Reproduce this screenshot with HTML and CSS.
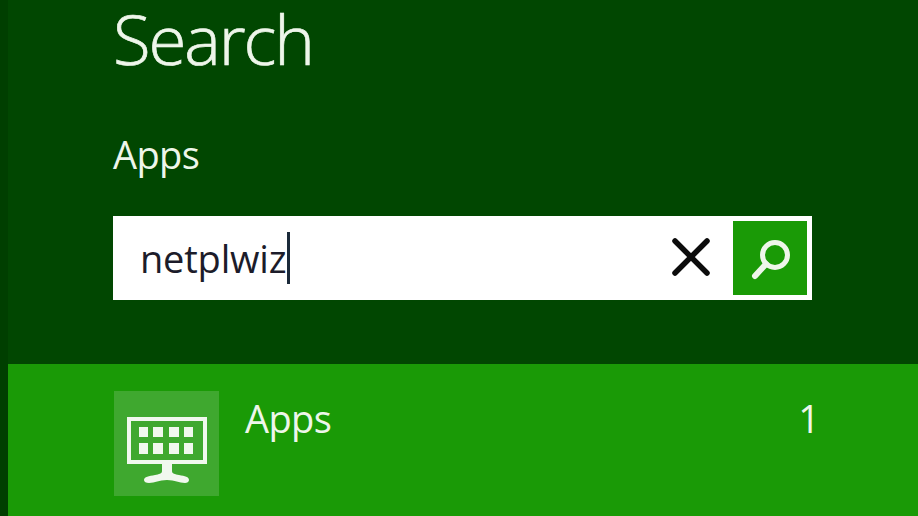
FILE: index.html
```html
<!DOCTYPE html>
<html lang="en">
<head>
<meta charset="utf-8">
<title>Search</title>
<link rel="stylesheet" href="styles.css">
</head>
<body>
<div class="charm">
  <section class="search-panel">
    <h1 class="title">Search</h1>
    <div class="scope">Apps</div>
    <div class="box">
      <div class="query"><span>netplwiz</span><i class="caret"></i></div>
      <svg class="clear" width="38" height="38" viewBox="0 0 38 38" aria-hidden="true"><path d="M3 3 L35 35 M35 3 L3 35" fill="none" stroke="#0c0c0c" stroke-width="5.500" stroke-linecap="round"/></svg>
      <div class="go">
        <svg width="74" height="74" viewBox="0 0 74 74" aria-hidden="true"><circle cx="42" cy="34" r="12.500" fill="none" stroke="#eef6ea" stroke-width="5"/><path d="M33 43 L22 55" fill="none" stroke="#eef6ea" stroke-width="6" stroke-linecap="round"/></svg>
      </div>
    </div>
  </section>
  <section class="results">
    <div class="tile">
      <svg width="80" height="66" viewBox="0 0 80 66" aria-hidden="true">
        <rect x="2" y="2" width="76" height="43" fill="none" stroke="#f1f8ee" stroke-width="4"/>
        <g fill="#f1f8ee">
          <rect x="12" y="10" width="9" height="10"/><rect x="26" y="10" width="10" height="10"/><rect x="42" y="10" width="10" height="10"/><rect x="57" y="10" width="9" height="10"/>
          <rect x="12" y="26" width="9" height="11"/><rect x="26" y="26" width="10" height="11"/><rect x="42" y="26" width="10" height="11"/><rect x="57" y="26" width="9" height="11"/>
          <path d="M35 47 H45 V54 C45 57 48 57 52 58 C58 59 62 60 62 63 C62 65 60 66 58 66 C52 66 48 63 40 63 C32 63 28 66 22 66 C19 66 17 65 17 63 C17 60 22 59 28 58 C32 57 35 57 35 54 Z"/>
        </g>
      </svg>
    </div>
    <div class="label">Apps</div>
    <div class="count">1</div>
  </section>
</div>
</body>
</html>
```
FILE: styles.css
```css
html, body {
  margin: 0;
  height: 100%;
  overflow: hidden;
  background: #003f00;
}
.charm {
  width: 918px;
  height: 516px;
  box-sizing: border-box;
  padding-left: 8px;
  display: flex;
  flex-direction: column;
  font-family: "Open Sans", "Noto Sans", sans-serif;
  color: #eef6ea;
}
.search-panel {
  height: 364px;
  box-sizing: border-box;
  background: #014701;
  padding-left: 105px;
  display: flex;
  flex-direction: column;
}
.title {
  margin: 0;
  height: 80px;
  font-size: 69px;
  font-weight: 300;
  letter-spacing: -2.100px;
  -webkit-text-stroke: 0.7px #eef6ea;
  line-height: 76px;
}
.scope {
  margin-top: 51px;
  height: 46px;
  font-size: 38px;
  font-weight: 400;
  letter-spacing: -0.600px;
  line-height: 46px;
}
.box {
  margin-top: 39px;
  width: 699px;
  height: 84px;
  box-sizing: border-box;
  background: #fff;
  padding: 5px;
  display: flex;
  align-items: center;
}
.query {
  flex: 1;
  padding-left: 22px;
  display: flex;
  align-items: center;
  color: #1c1c2a;
  font-size: 38px;
  letter-spacing: -0.200px;
}
.caret {
  width: 3px;
  height: 52px;
  margin-left: 1px;
  background: #1b2a3a;
}
.clear {
  margin-right: 23px;
  margin-bottom: 2px;
}
.go {
  width: 74px;
  height: 74px;
  background: #1a9a06;
  display: flex;
  align-items: center;
  justify-content: center;
}
.results {
  flex: 1;
  background: #1a9a06;
  padding: 27px 98px 0 106px;
  display: flex;
  align-items: flex-start;
}
.tile {
  width: 105px;
  height: 105px;
  box-sizing: border-box;
  padding-top: 26px;
  background: #3fa82f;
  display: flex;
  align-items: flex-start;
  justify-content: center;
}
.label {
  flex: 1;
  margin-left: 26px;
  font-size: 38px;
  letter-spacing: -0.600px;
  line-height: 54px;
}
.count {
  font-size: 38px;
  line-height: 54px;
}
```
